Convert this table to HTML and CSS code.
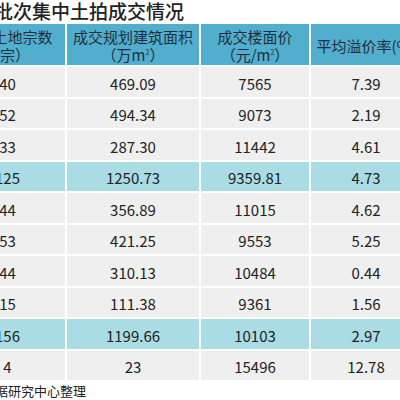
FILE: index.html
```html
<!DOCTYPE html>
<html lang="zh-CN">
<head>
    <meta charset="UTF-8">
    <meta name="viewport" content="width=device-width, initial-scale=1.0">
    <title>集中土拍成交情况</title>
    <link rel="stylesheet" href="styles.css">
</head>
<body>
    <div class="title">批次集中土拍成交情况</div>

    <div class="grid">
        <div class="head"><span>成交土地宗数<br>（宗）</span></div>
        <div class="head"><span>成交规划建筑面积<br>（万m<sup>2</sup>）</span></div>
        <div class="head"><span>成交楼面价<br>（元/m<sup>2</sup>）</span></div>
        <div class="head"><span>平均溢价率(%)</span></div>

        <div class="cell">40</div><div class="cell">469.09</div><div class="cell">7565</div><div class="cell">7.39</div>
        <div class="cell">52</div><div class="cell">494.34</div><div class="cell">9073</div><div class="cell">2.19</div>
        <div class="cell">33</div><div class="cell">287.30</div><div class="cell">11442</div><div class="cell">4.61</div>
        <div class="cell sum">125</div><div class="cell sum">1250.73</div><div class="cell sum">9359.81</div><div class="cell sum">4.73</div>
        <div class="cell">44</div><div class="cell">356.89</div><div class="cell">11015</div><div class="cell">4.62</div>
        <div class="cell">53</div><div class="cell">421.25</div><div class="cell">9553</div><div class="cell">5.25</div>
        <div class="cell">44</div><div class="cell">310.13</div><div class="cell">10484</div><div class="cell">0.44</div>
        <div class="cell">15</div><div class="cell">111.38</div><div class="cell">9361</div><div class="cell">1.56</div>
        <div class="cell sum">156</div><div class="cell sum">1199.66</div><div class="cell sum">10103</div><div class="cell sum">2.97</div>
        <div class="cell">4</div><div class="cell">23</div><div class="cell">15496</div><div class="cell">12.78</div>
    </div>

    <div class="note">据研究中心整理</div>
</body>
</html>
```

FILE: styles.css
```css
body{
    margin: 0;
    background: #fff;
    color: #222;
    font-family: "Noto Sans CJK SC", "Noto Sans", sans-serif;
    overflow: hidden;
}
.title{
    margin-left: -6px;
    height: 24px;
    font-size: 19px;
    line-height: 22px;
    font-weight: 500;
}
.grid{
    display: grid;
    grid-template-columns: 115px 132px 108px 110px;
    grid-template-rows: 41px repeat(10, 29.5px);
    gap: 2px;
    margin-left: -50px;
    width: 471px;
}
.head{
    display: flex;
    align-items: center;
    justify-content: center;
    padding-top: 3px;
    background: #52aece;
    color: #1f2e3a;
    font-size: 15px;
    line-height: 18px;
    text-align: center;
    white-space: nowrap;
}
.head sup{
    font-size: 7px;
    line-height: 0;
    vertical-align: 6px;
}
.cell{
    display: flex;
    align-items: center;
    justify-content: center;
    padding-top: 3px;
    background: #efefef;
    font-size: 15px;
}
.sum{
    background: #aadce6;
}
.note{
    margin-left: -5px;
    margin-top: 2px;
    font-size: 13px;
    line-height: 18px;
}
```
